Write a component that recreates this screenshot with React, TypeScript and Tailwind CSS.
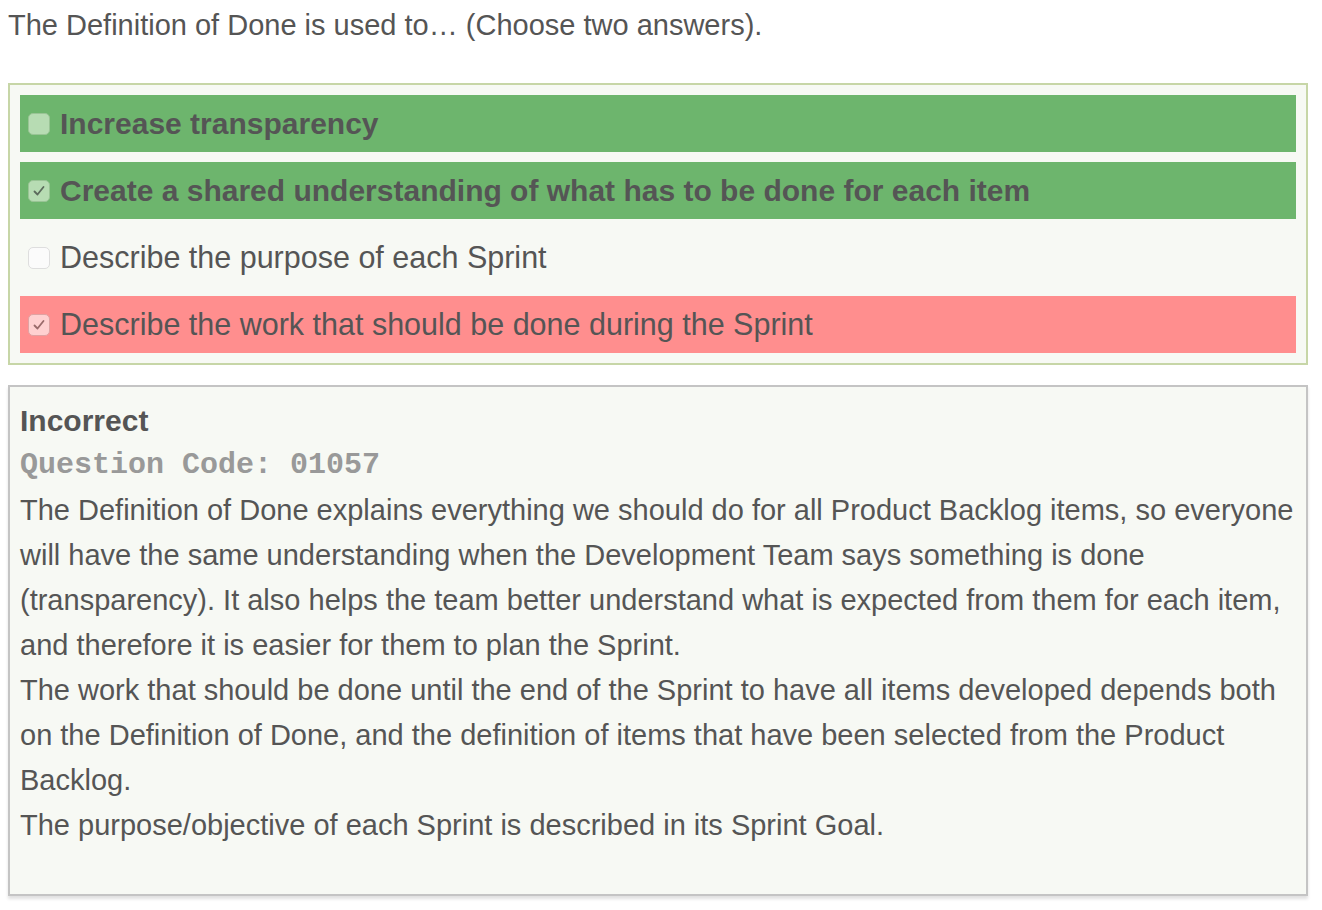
import React from "react";

type Opt = { text: string; checked: boolean; state: "correct" | "wrong" | "none"; bold?: boolean };

const options: Opt[] = [
  { text: "Increase transparency", checked: false, state: "correct", bold: true },
  { text: "Create a shared understanding of what has to be done for each item", checked: true, state: "correct", bold: true },
  { text: "Describe the purpose of each Sprint", checked: false, state: "none" },
  { text: "Describe the work that should be done during the Sprint", checked: true, state: "wrong" },
];

function Box({ checked, state }: { checked: boolean; state: Opt["state"] }) {
  const cls =
    state === "correct"
      ? "bg-[#b7dcb3] border-[#99c495]"
      : state === "wrong"
      ? "bg-[#ffd0d0] border-[#e0a2a2]"
      : "bg-[#fbfbfb] border-[#dedede]";
  const stroke = state === "wrong" ? "#9a6a6a" : "#5c6b5c";
  return (
    <span className={`flex h-[22px] w-[22px] shrink-0 items-center justify-center rounded-[5px] border ${cls}`}>
      {checked && (
        <svg width="14" height="14" viewBox="0 0 14 14">
          <path d="M2.5 7.5 L5.5 10.5 L11.5 3" fill="none" stroke={stroke} strokeWidth="1.8" strokeLinecap="round" strokeLinejoin="round" />
        </svg>
      )}
    </span>
  );
}

export default function App() {
  return (
    <div className="min-h-[910px] w-[1322px] bg-white text-[#555555]" style={{ fontFamily: '"Liberation Sans", Arial, sans-serif' }}>
      <div className="w-[1308px] pl-[8px] pt-[3px]">
        <p className="text-[29px] leading-[45px]">The Definition of Done is used to… (Choose two answers).</p>
        <div className="mt-[35px] flex flex-col gap-[10px] border-2 border-[#c7d6a7] bg-[#f7f9f4] px-[10px] py-[10px]">
          {options.map((o, i) => (
            <div
              key={i}
              className={`flex h-[57px] items-center gap-[10px] pl-[8px] ${
                o.state === "correct" ? "bg-[#6db56d]" : o.state === "wrong" ? "bg-[#ff8e8e]" : ""
              }`}
            >
              <Box checked={o.checked} state={o.state} />
              <span className={`whitespace-nowrap leading-none ${o.bold ? "text-[30px] font-bold" : "text-[30.5px]"}`}>{o.text}</span>
            </div>
          ))}
        </div>
        <div className="mt-[20px] border-2 border-[#c4c4c4] bg-[#f7f9f4] px-[10px] pb-[46px] pt-[12px] shadow-[0_3px_3px_rgba(0,0,0,0.12)]">
          <div className="text-[30px] font-bold leading-[44px]">Incorrect</div>
          <div className="mb-[4px] mt-[3px] text-[30px] font-bold leading-[38px] text-[#999999]" style={{ fontFamily: '"Liberation Mono", "Courier New", monospace' }}>
            Question Code: 01057
          </div>
          <div className="whitespace-nowrap text-[29px] leading-[45px]">
            <p>
              The Definition of Done explains everything we should do for all Product Backlog items, so everyone
              <br />
              will have the same understanding when the Development Team says something is done
              <br />
              (transparency). It also helps the team better understand what is expected from them for each item,
              <br />
              and therefore it is easier for them to plan the Sprint.
            </p>
            <p>
              The work that should be done until the end of the Sprint to have all items developed depends both
              <br />
              on the Definition of Done, and the definition of items that have been selected from the Product
              <br />
              Backlog.
            </p>
            <p>The purpose/objective of each Sprint is described in its Sprint Goal.</p>
          </div>
        </div>
      </div>
    </div>
  );
}
